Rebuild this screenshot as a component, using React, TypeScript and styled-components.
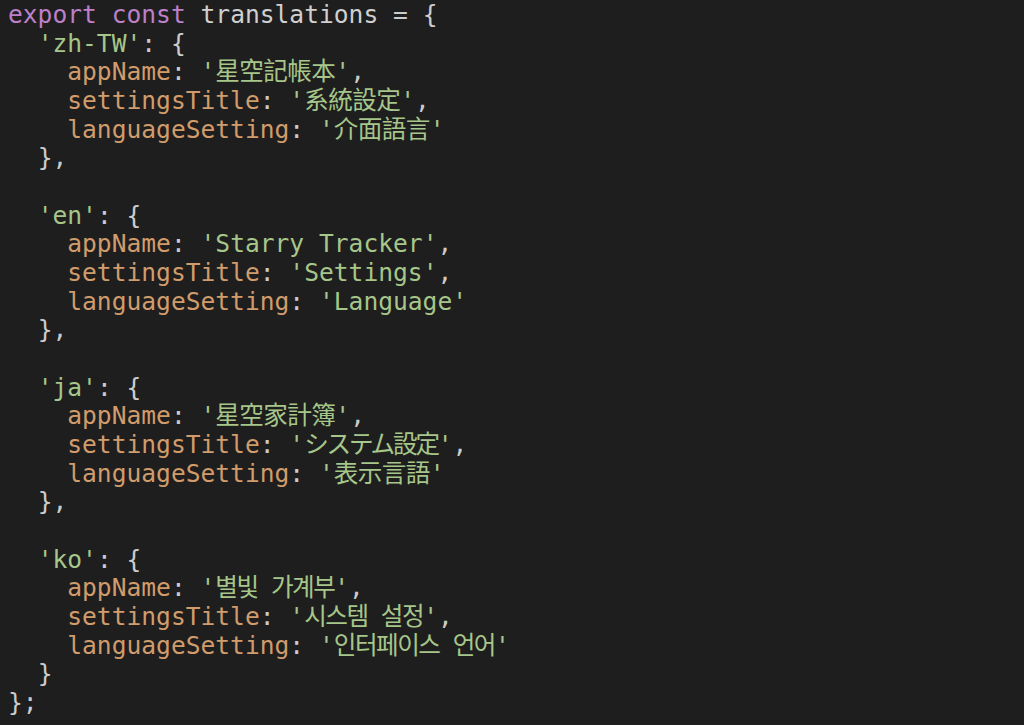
import React from "react";
import styled, { createGlobalStyle } from "styled-components";

const GlobalStyle = createGlobalStyle`
  html, body {
    margin: 0;
    padding: 0;
    background: #1e1e1e;
  }
`;

const Editor = styled.div`
  min-height: 100vh;
  box-sizing: border-box;
  padding: 1px 0 0 8px;
  background: #1e1e1e;
  font-family: "DejaVu Sans Mono", "Noto Sans CJK TC", monospace;
  font-size: 24.6px;
  line-height: 28.68px;
  color: #d0d0d0;
  display: flex;
  flex-direction: column;
`;

const Line = styled.div`
  height: 28.68px;
  white-space: pre;
`;

const Kw = styled.span`
  color: #bd80c9;
`;

const Ident = styled.span`
  color: #d0d0d0;
`;

const Punc = styled.span`
  color: #cccccc;
`;

const Prop = styled.span`
  color: #d19c6c;
`;

const cjkFonts: Record<string, string> = {
  tc: '"DejaVu Sans Mono", "Noto Sans CJK TC", sans-serif',
  jp: '"DejaVu Sans Mono", "Noto Sans CJK JP", sans-serif',
  kr: '"DejaVu Sans Mono", "Noto Sans CJK KR", sans-serif',
  none: '"DejaVu Sans Mono", monospace',
};

const Str = styled.span<{ $font?: string }>`
  color: #a6c68a;
  font-family: ${(p) => cjkFonts[p.$font || "none"]};
`;

const Tight = styled.span<{ $track: number }>`
  letter-spacing: ${(p) => p.$track}px;
`;

type Entry = {
  key: string;
  font: string;
  track: number;
  values: [string, string, string];
  last?: boolean;
};

const entries: Entry[] = [
  { key: "zh-TW", font: "tc", track: -0.6, values: ["星空記帳本", "系統設定", "介面語言"] },
  { key: "en", font: "none", track: 0, values: ["Starry Tracker", "Settings", "Language"] },
  { key: "ja", font: "jp", track: -0.6, values: ["星空家計簿", "システム設定", "表示言語"] },
  { key: "ko", font: "kr", track: -1.5, values: ["별빛 가계부", "시스템 설정", "인터페이스 언어"], last: true },
];

const fields = ["appName", "settingsTitle", "languageSetting"];

const trackFor = (e: Entry, v: string) => {
  if (e.font === "jp" && /[\u30A0-\u30FF]/.test(v)) return -2.2;
  return e.track;
};

const StrVal: React.FC<{ e: Entry; v: string }> = ({ e, v }) => (
  <Str $font={e.font}>
    '<Tight $track={trackFor(e, v)}>{v}</Tight>'
  </Str>
);

export default function App() {
  return (
    <>
      <GlobalStyle />
      <Editor>
        <Line>
          <Kw>export</Kw> <Kw>const</Kw> <Ident>translations</Ident> <Punc>=</Punc> <Punc>{"{"}</Punc>
        </Line>
        {entries.map((e, i) => (
          <React.Fragment key={e.key}>
            <Line>
              {"  "}
              <Str>'{e.key}'</Str>
              <Punc>: {"{"}</Punc>
            </Line>
            {fields.map((f, j) => (
              <Line key={f}>
                {"    "}
                <Prop>{f}</Prop>
                <Punc>: </Punc>
                <StrVal e={e} v={e.values[j]} />
                {j < 2 ? <Punc>,</Punc> : null}
              </Line>
            ))}
            <Line>
              {"  "}
              <Punc>{e.last ? "}" : "},"}</Punc>
            </Line>
            {i < entries.length - 1 ? <Line> </Line> : null}
          </React.Fragment>
        ))}
        <Line>
          <Punc>{"};"}</Punc>
        </Line>
      </Editor>
    </>
  );
}
